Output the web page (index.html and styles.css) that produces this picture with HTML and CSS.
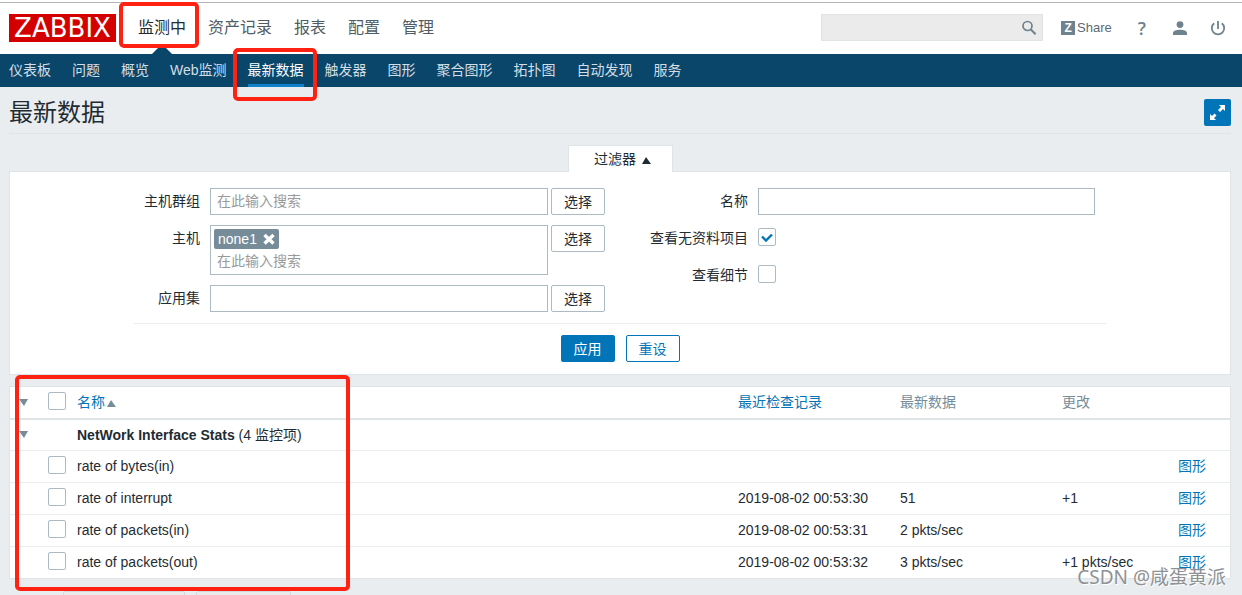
FILE: index.html
```html
<!DOCTYPE html>
<html lang="zh-CN">
<head>
<meta charset="utf-8">
<title>最新数据</title>
<link rel="stylesheet" href="styles.css">
</head>
<body>
<header class="topbar">
  <a class="logo" href="#">ZABBIX</a>
  <nav class="mainnav">
    <a class="active" href="#">监测中</a>
    <a href="#">资产记录</a>
    <a href="#">报表</a>
    <a href="#">配置</a>
    <a href="#">管理</a>
  </nav>
  <form class="search">
    <input type="text" aria-label="搜索">
    <button type="button" aria-label="搜索">
      <svg width="16" height="16" viewBox="0 0 16 16" fill="none" stroke="#6f838e"><circle cx="6.5" cy="6" r="4.5" stroke-width="1.7"/><path d="M9.6 9.2l5 5" stroke-width="2.1"/></svg>
    </button>
  </form>
  <div class="tools">
    <a class="share" href="#"><span class="zbadge">Z</span>Share</a>
    <a href="#" class="help">?</a>
    <a href="#" aria-label="用户"><svg width="16" height="16" viewBox="0 0 16 16" fill="#6f838e"><circle cx="8" cy="4.6" r="3.4"/><path d="M1 15v-2c0-2.2 3.5-3.2 7-3.2s7 1 7 3.2v2z"/></svg></a>
    <a href="#" aria-label="退出"><svg width="16" height="16" viewBox="0 0 16 16" fill="none" stroke="#6f838e" stroke-width="1.8"><path d="M8 1v8M4.2 3.2a6.2 6.2 0 1 0 7.6 0"/></svg></a>
  </div>
</header>
<nav class="subnav">
  <a href="#">仪表板</a>
  <a href="#">问题</a>
  <a href="#">概览</a>
  <a href="#">Web监测</a>
  <a class="active" href="#">最新数据</a>
  <a href="#">触发器</a>
  <a href="#">图形</a>
  <a href="#">聚合图形</a>
  <a href="#">拓扑图</a>
  <a href="#">自动发现</a>
  <a href="#">服务</a>
</nav>
<main class="page">
  <div class="title">
    <h1>最新数据</h1>
    <button class="fullscreen" type="button" aria-label="全屏">
      <svg width="17" height="17" viewBox="0 0 17 17" fill="#fff"><path d="M10 1h6v6l-2-2-3 3-2-2 3-3zM1 16v-6l2 2 2.500-2.500 2 2L5 14l2 2z"/></svg>
    </button>
  </div>
  <div class="tabs"><button class="tab" type="button">过滤器 <span class="up dark"></span></button></div>
  <form class="filter">
    <div class="columns">
      <div class="fields left">
        <label for="groups">主机群组</label>
        <div class="line"><input class="box" id="groups" type="text" placeholder="在此输入搜索"><button class="btn" type="button">选择</button></div>
        <label for="hosts">主机</label>
        <div class="line">
          <div class="box multi">
            <span class="chip">none1 <button type="button" aria-label="移除"><svg width="12" height="12" viewBox="0 0 12 12" stroke="#fff" stroke-width="3.4"><path d="M1.500 2l9 8.500M10.500 2l-9 8.500"/></svg></button></span>
            <input id="hosts" type="text" placeholder="在此输入搜索">
          </div>
          <button class="btn" type="button">选择</button>
        </div>
        <label for="apps">应用集</label>
        <div class="line"><input class="box" id="apps" type="text"><button class="btn" type="button">选择</button></div>
      </div>
      <div class="fields right">
        <label for="name">名称</label>
        <div class="line"><input class="box" id="name" type="text"></div>
        <label for="nodata">查看无资料项目</label>
        <div class="line"><input class="check" id="nodata" type="checkbox" checked></div>
        <label for="details">查看细节</label>
        <div class="line"><input class="check" id="details" type="checkbox"></div>
      </div>
    </div>
    <div class="actions">
      <button class="btn primary" type="button">应用</button>
      <button class="btn outline" type="button">重设</button>
    </div>
  </form>
  <table class="data">
    <colgroup><col class="c-toggle"><col class="c-check"><col><col class="c-last"><col class="c-last"><col class="c-change"><col class="c-link"></colgroup>
    <thead>
      <tr><th><span class="down"></span></th><th><input class="check" type="checkbox" aria-label="全选"></th><th><a href="#">名称<span class="up"></span></a></th><th><a href="#">最近检查记录</a></th><th>最新数据</th><th>更改</th><th></th></tr>
    </thead>
    <tbody>
      <tr><td><span class="down"></span></td><td></td><td colspan="5"><b>NetWork Interface Stats</b> (4 监控项)</td></tr>
      <tr><td></td><td><input class="check" id="i1" type="checkbox"></td><td><label for="i1">rate of bytes(in)</label></td><td></td><td></td><td></td><td><a href="#">图形</a></td></tr>
      <tr><td></td><td><input class="check" id="i2" type="checkbox"></td><td><label for="i2">rate of interrupt</label></td><td>2019-08-02 00:53:30</td><td>51</td><td>+1</td><td><a href="#">图形</a></td></tr>
      <tr><td></td><td><input class="check" id="i3" type="checkbox"></td><td><label for="i3">rate of packets(in)</label></td><td>2019-08-02 00:53:31</td><td>2 pkts/sec</td><td></td><td><a href="#">图形</a></td></tr>
      <tr><td></td><td><input class="check" id="i4" type="checkbox"></td><td><label for="i4">rate of packets(out)</label></td><td>2019-08-02 00:53:32</td><td>3 pkts/sec</td><td>+1 pkts/sec</td><td><a href="#">图形</a></td></tr>
    </tbody>
  </table>
  <div class="footer"><button class="wide" type="button" disabled></button><button type="button" disabled></button></div>
</main>
<div class="mark mark-menu"></div>
<div class="mark mark-sub"></div>
<div class="mark mark-table"></div>
<div class="watermark">CSDN @咸蛋黄派</div>
</body>
</html>
```
FILE: styles.css
```css
* { box-sizing: border-box; }
html { background: #fff; }
body {
  margin: 0;
  position: relative;
  height: 100vh;
  overflow: hidden;
  border-top: 2px solid #fff;
  background: #e9edf0;
  color: #1f2c33;
  font: 14px/18px "Liberation Sans", "Noto Sans CJK SC", sans-serif;
}
a { color: #0275b8; text-decoration: none; }
button, input { font: inherit; color: inherit; margin: 0; }
button { padding: 0; border: 0; background: none; }

.topbar {
  display: flex;
  align-items: center;
  height: 52px;
  padding: 0 16px 2px 9px;
  border-top: 1px solid #b4b4b4;
  background: #fff;
}
.logo {
  width: 107px;
  height: 28px;
  background: #d40000;
  color: #fff;
  font: 26px/28px "DejaVu Sans", sans-serif;
  text-align: center;
}
.mainnav { display: flex; gap: 22px; margin-left: 22px; font-size: 16px; align-self: stretch; align-items: center; }
.mainnav a { color: #4f5d66; }
.mainnav .active { position: relative; display: flex; align-items: center; align-self: stretch; color: #1f2c33; }
.mainnav .active::after {
  content: "";
  position: absolute;
  bottom: -2px;
  left: 50%;
  margin-left: -10px;
  border: solid transparent;
  border-width: 0 10px 10px;
  border-bottom-color: #0a466a;
}
.search { display: flex; width: 222px; height: 27px; margin-left: auto; border: 1px solid #dfe4e7; background: #ebebeb; }
.search input { flex: 1; min-width: 0; border: 0; background: none; }
.search button { width: 26px; display: flex; align-items: center; justify-content: center; }
.tools { display: flex; align-items: center; gap: 22px; margin-left: 18px; }
.tools a { display: flex; align-items: center; color: #6f838e; }
.tools .share { gap: 2px; font-size: 13px; color: #5a6a74; }
.zbadge { width: 14px; height: 14px; background: #6f838e; color: #fff; font: bold 12px/14px "Liberation Sans", sans-serif; text-align: center; }
.tools .help { font: 600 18px/20px "Open Sans", sans-serif; margin: 0 4px; }

.subnav { display: flex; gap: 21px; height: 33px; padding: 0 9px; background: #0a466a; }
.subnav a { display: flex; align-items: center; color: #d3dee5; border-bottom: 3px solid transparent; padding-top: 2px; }
.subnav .active { color: #fff; border-color: #0f81c8; }

.page { padding: 0 11px 0 9px; }
.title { display: flex; align-items: center; justify-content: space-between; height: 47px; padding-top: 5px; border-bottom: 1px solid #dfe4e7; }
.title h1 { margin: 0; font-size: 24px; line-height: 30px; font-weight: normal; }
.fullscreen { width: 27px; height: 27px; border-radius: 2px; background: #0275b8; display: grid; place-items: center; }

.tabs { display: flex; justify-content: center; margin-top: 11px; }
.tab { height: 27px; width: 105px; margin-bottom: -1px; padding-left: 5px; border: 1px solid #dfe4e7; border-bottom: 0; background: #fff; z-index: 1; }
.up, .down { display: inline-block; border: solid transparent; }
.up { border-width: 0 5px 7px 4px; border-bottom-color: #768d99; margin-left: 2px; }
.up.dark { border-bottom-color: #1f2c33; }
.down { border-width: 7px 4px 0 5px; border-top-color: #768d99; }

.filter { border: 1px solid #dfe4e7; background: #fff; padding: 16px 124px 12px; }
.columns { display: flex; border-bottom: 1px solid #e9edf0; padding-bottom: 11px; }
.fields { display: grid; column-gap: 10px; row-gap: 10px; align-content: start; }
.left { grid-template-columns: 66px 1fr; flex: 0 0 471px; }
.right { grid-template-columns: 143px 1fr; flex: 1; padding-right: 11px; }
.fields label { text-align: right; line-height: 26px; white-space: nowrap; }
.line { display: flex; gap: 3px; align-items: flex-start; min-height: 27px; }
.right .line:has(.check) { padding-top: 3px; }
.box { flex: 1; min-width: 0; height: 27px; border: 1px solid #acbbc2; background: #fff; padding: 0 6px 2px; border-radius: 0; }
.box.multi { height: auto; padding: 3px 3px 2px; }
.multi input { display: block; width: 100%; height: 23px; border: 0; padding: 0 3px; }
::placeholder { color: #9a9a9a; opacity: 1; }
.chip { display: inline-flex; align-items: center; gap: 6px; height: 20px; padding: 0 4px; border-radius: 2px; background: #768d99; color: #fff; vertical-align: top; }
.chip button { display: flex; }
.btn { width: 54px; height: 27px; border: 1px solid #acbbc2; border-radius: 2px; background: #fff; }
.check { appearance: none; display: block; width: 18px; height: 18px; border: 1px solid #acbbc2; border-radius: 2px; background: #fff; }
.check:checked { background: #fff url("data:image/svg+xml,%3Csvg xmlns='http://www.w3.org/2000/svg' viewBox='0 0 16 16'%3E%3Cpath d='M3 7.5l4 4 6-6' fill='none' stroke='%230275b8' stroke-width='2.4'/%3E%3C/svg%3E"); }
.actions { display: flex; justify-content: center; gap: 11px; margin-top: 11px; }
.btn.primary { background: #0275b8; border-color: #0275b8; color: #fff; }
.btn.outline { border-color: #0275b8; color: #0275b8; }

.data { width: 100%; margin-top: 11px; border: 1px solid #dfe4e7; border-collapse: separate; border-spacing: 0; table-layout: fixed; background: #fff; }
.data th, .data td { height: 32px; padding: 0 0 1px; text-align: left; font-weight: normal; border-bottom: 1px solid #e9edf0; white-space: nowrap; }
.data th { height: 33px; color: #768d99; border-bottom: 2px solid #dfe4e7; }
.data tbody tr:first-child td { height: 31px; }
.data tbody tr:last-child td { border-bottom: 0; height: 31px; }
.data .check { margin-bottom: 2px; }
.data td:first-child, .data th:first-child { padding-left: 9px; }
.data .down { display: block; width: 9px; }
.c-toggle { width: 38px; }
.c-check { width: 29px; }
.c-last { width: 162px; }
.c-change { width: 116px; }
.c-link { width: 52px; }
.footer { display: flex; gap: 11px; margin: 12px 0 0 54px; }
.footer button { width: 95px; height: 27px; border: 1px solid #d3dade; border-radius: 2px; background: #ebebeb; }
.footer .wide { width: 122px; }

.mark { position: absolute; border: 4px solid #ff2213; border-radius: 5px; pointer-events: none; }
.mark-menu { left: 119px; top: 0; width: 80px; height: 46px; }
.mark-sub { left: 233px; top: 46px; width: 84px; height: 53px; }
.mark-table { left: 15px; top: 373px; width: 335px; height: 216px; }
.watermark { position: absolute; right: 16px; bottom: 6px; font: 19px/24px "Noto Sans", "Noto Sans CJK SC", sans-serif; color: #8f9294; text-shadow: 1px 1px 0 #fff; }
```
